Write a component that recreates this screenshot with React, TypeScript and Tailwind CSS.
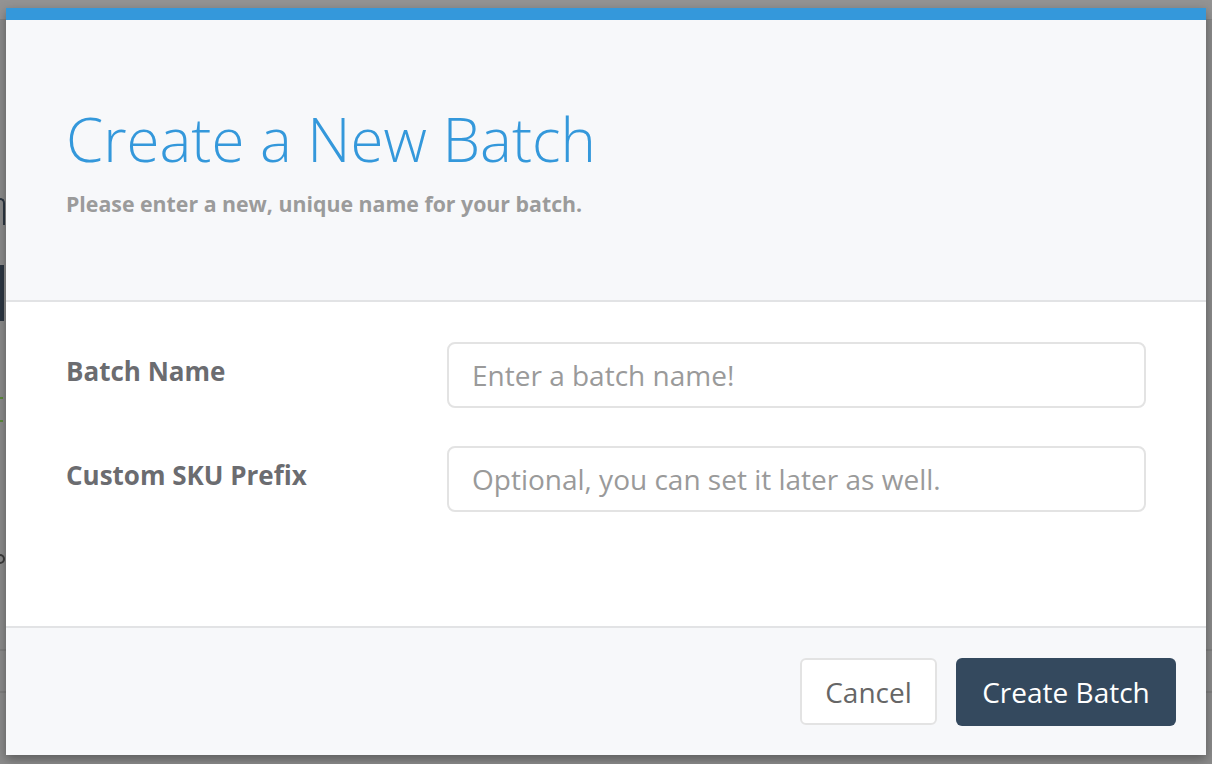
import React from 'react';

const font = { fontFamily: '"Open Sans", "Noto Sans", sans-serif' };

function BackgroundPage() {
  return (
    <div className="h-[764px] w-full bg-[#8b8b8b] overflow-hidden" style={font}>
      <div className="h-[20px] bg-[#939393] border-b border-[#848484]" />
      <div className="pt-[178px] pl-0">
        <div className="h-[27px] w-[5px] border-r-2 border-t-2 border-[#2c3642] rounded-tr-full" />
        <div className="mt-[40px] h-[56px] w-[4px] bg-[#2c3642]" />
        <div className="mt-[76px] h-[2px] w-[3px] bg-[#5c8a3a]" />
        <div className="mt-[21px] h-[2px] w-[3px] bg-[#5c8a3a]" />
        <div className="mt-[132px] h-[10px] w-[5px] rounded-r-full border-2 border-l-0 border-[#3b3b3b]" />
      </div>
      <div className="mt-[85px] border-t-2 border-[#7f7f7f] h-[42px] flex">
        <div className="w-[404px]" />
        <div className="w-[64px] border-x border-[#7f7f7f]" />
        <div className="flex-1" />
        <div className="w-[1px] bg-[#7f7f7f] mr-[106px]" />
      </div>
      <div className="border-t-2 border-[#7f7f7f] h-[52px] flex">
        <div className="w-[404px]" />
        <div className="w-[64px] bg-[#7c7c7c]" />
        <div className="flex-1" />
        <div className="w-[1px] bg-[#7f7f7f] mr-[106px]" />
      </div>
    </div>
  );
}

function Field({ label, placeholder }: { label: string; placeholder: string }) {
  return (
    <div className="flex items-start">
      <label className="w-[381px] shrink-0 pt-[16px] text-[26px] leading-none font-bold text-[#6b6c70]">
        {label}
      </label>
      <input
        type="text"
        placeholder={placeholder}
        className="h-[66px] flex-1 rounded-[8px] border-2 border-[#e3e3e3] bg-white pl-[23px] text-[28px] text-[#555] placeholder:text-[#9a9a9a] outline-none"
        style={font}
      />
    </div>
  );
}

export default function App() {
  return (
    <div className="relative h-[764px] w-[1212px] overflow-hidden" style={font}>
      <BackgroundPage />
      <div className="absolute inset-0 px-[6px] pt-[8px]">
        <div className="flex h-[747px] w-[1200px] flex-col bg-white shadow-[0_4px_10px_rgba(0,0,0,0.35)]">
          <div className="h-[12px] shrink-0 bg-[#3498db]" />
          <div className="h-[282px] shrink-0 border-b-2 border-[#e2e3e5] bg-[#f7f8fa] px-[60px] pt-[89px]">
            <h1 className="text-[60px] leading-none font-light text-[#3498db]">
              Create a New Batch
            </h1>
            <p className="mt-[24px] text-[21.3px] leading-none font-bold text-[#9b9b9b]">
              Please enter a new, unique name for your batch.
            </p>
          </div>
          <div className="flex h-[324px] shrink-0 flex-col gap-[38px] px-[60px] pt-[40px]">
            <Field label="Batch Name" placeholder="Enter a batch name!" />
            <Field label="Custom SKU Prefix" placeholder="Optional, you can set it later as well." />
          </div>
          <div className="flex flex-1 items-start justify-end gap-[19px] border-t-2 border-[#e2e3e5] bg-[#f7f8fa] pr-[30px] pt-[30px]">
            <button className="h-[67px] w-[137px] rounded-[6px] border-2 border-[#e3e3e3] bg-white text-[28px] text-[#666]">
              Cancel
            </button>
            <button className="h-[68px] w-[220px] rounded-[6px] bg-[#34495e] text-[28px] text-white">
              Create Batch
            </button>
          </div>
        </div>
      </div>
    </div>
  );
}
